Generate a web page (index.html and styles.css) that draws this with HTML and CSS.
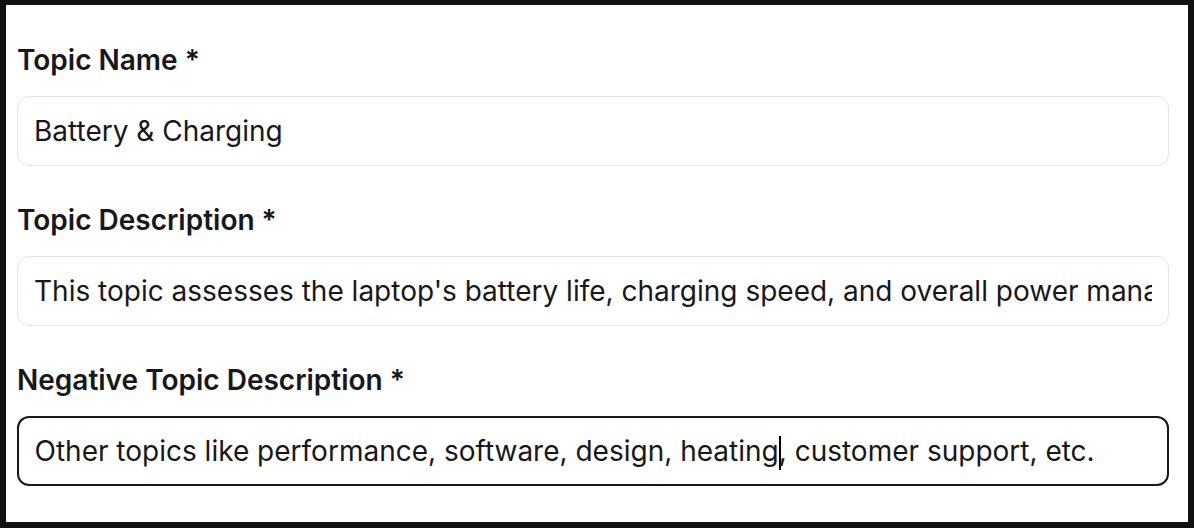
FILE: index.html
```html
<!DOCTYPE html>
<html lang="en">
<head>
<meta charset="utf-8">
<title>Topic form</title>
<link rel="stylesheet" href="styles.css">
</head>
<body>
<div class="frame">
  <form class="form">
    <div class="field">
      <label class="label">Topic Name *</label>
      <div class="input"><div class="value">Battery &amp; Charging</div></div>
    </div>
    <div class="field">
      <label class="label">Topic Description *</label>
      <div class="input"><div class="value">This topic assesses the laptop's battery life, charging speed, and overall power management.</div></div>
    </div>
    <div class="field">
      <label class="label">Negative Topic Description *</label>
      <div class="input focused"><div class="value">Other topics like performance, software, design, heating<span class="caret"></span>, customer support, etc.</div></div>
    </div>
  </form>
</div>
</body>
</html>
```
FILE: styles.css
```css
* { box-sizing: border-box; }
html, body { margin: 0; padding: 0; background: #ffffff; }
body { font-family: Inter, "Noto Sans", "Liberation Sans", sans-serif; color: #18181b; }
.frame {
  width: 1194px;
  height: 528px;
  border: 6px solid #111111;
  border-top-width: 5px;
  background: #ffffff;
  padding: 37px 19px 0 11px;
}
.form { display: flex; flex-direction: column; gap: 36px; }
.field { display: flex; flex-direction: column; gap: 18px; }
.label {
  font-size: 28px;
  font-weight: 600;
  line-height: 36px;
  height: 36px;
  color: #18181b;
}
.input {
  height: 70px;
  border: 1.5px solid #e4e4e7;
  border-radius: 12px;
  padding: 0 16px;
  display: flex;
  align-items: center;
  font-size: 28px;
  color: #18181b;
}
.input.focused { border: 2px solid #18181b; padding: 0 15.5px; }
.value { white-space: nowrap; overflow: hidden; flex: 1; min-width: 0; line-height: 38px; }
.caret {
  display: inline-block;
  width: 0;
  height: 34px;
  border-left: 2px solid #000;
  vertical-align: -9px;
  margin-right: -2px;
}
```
